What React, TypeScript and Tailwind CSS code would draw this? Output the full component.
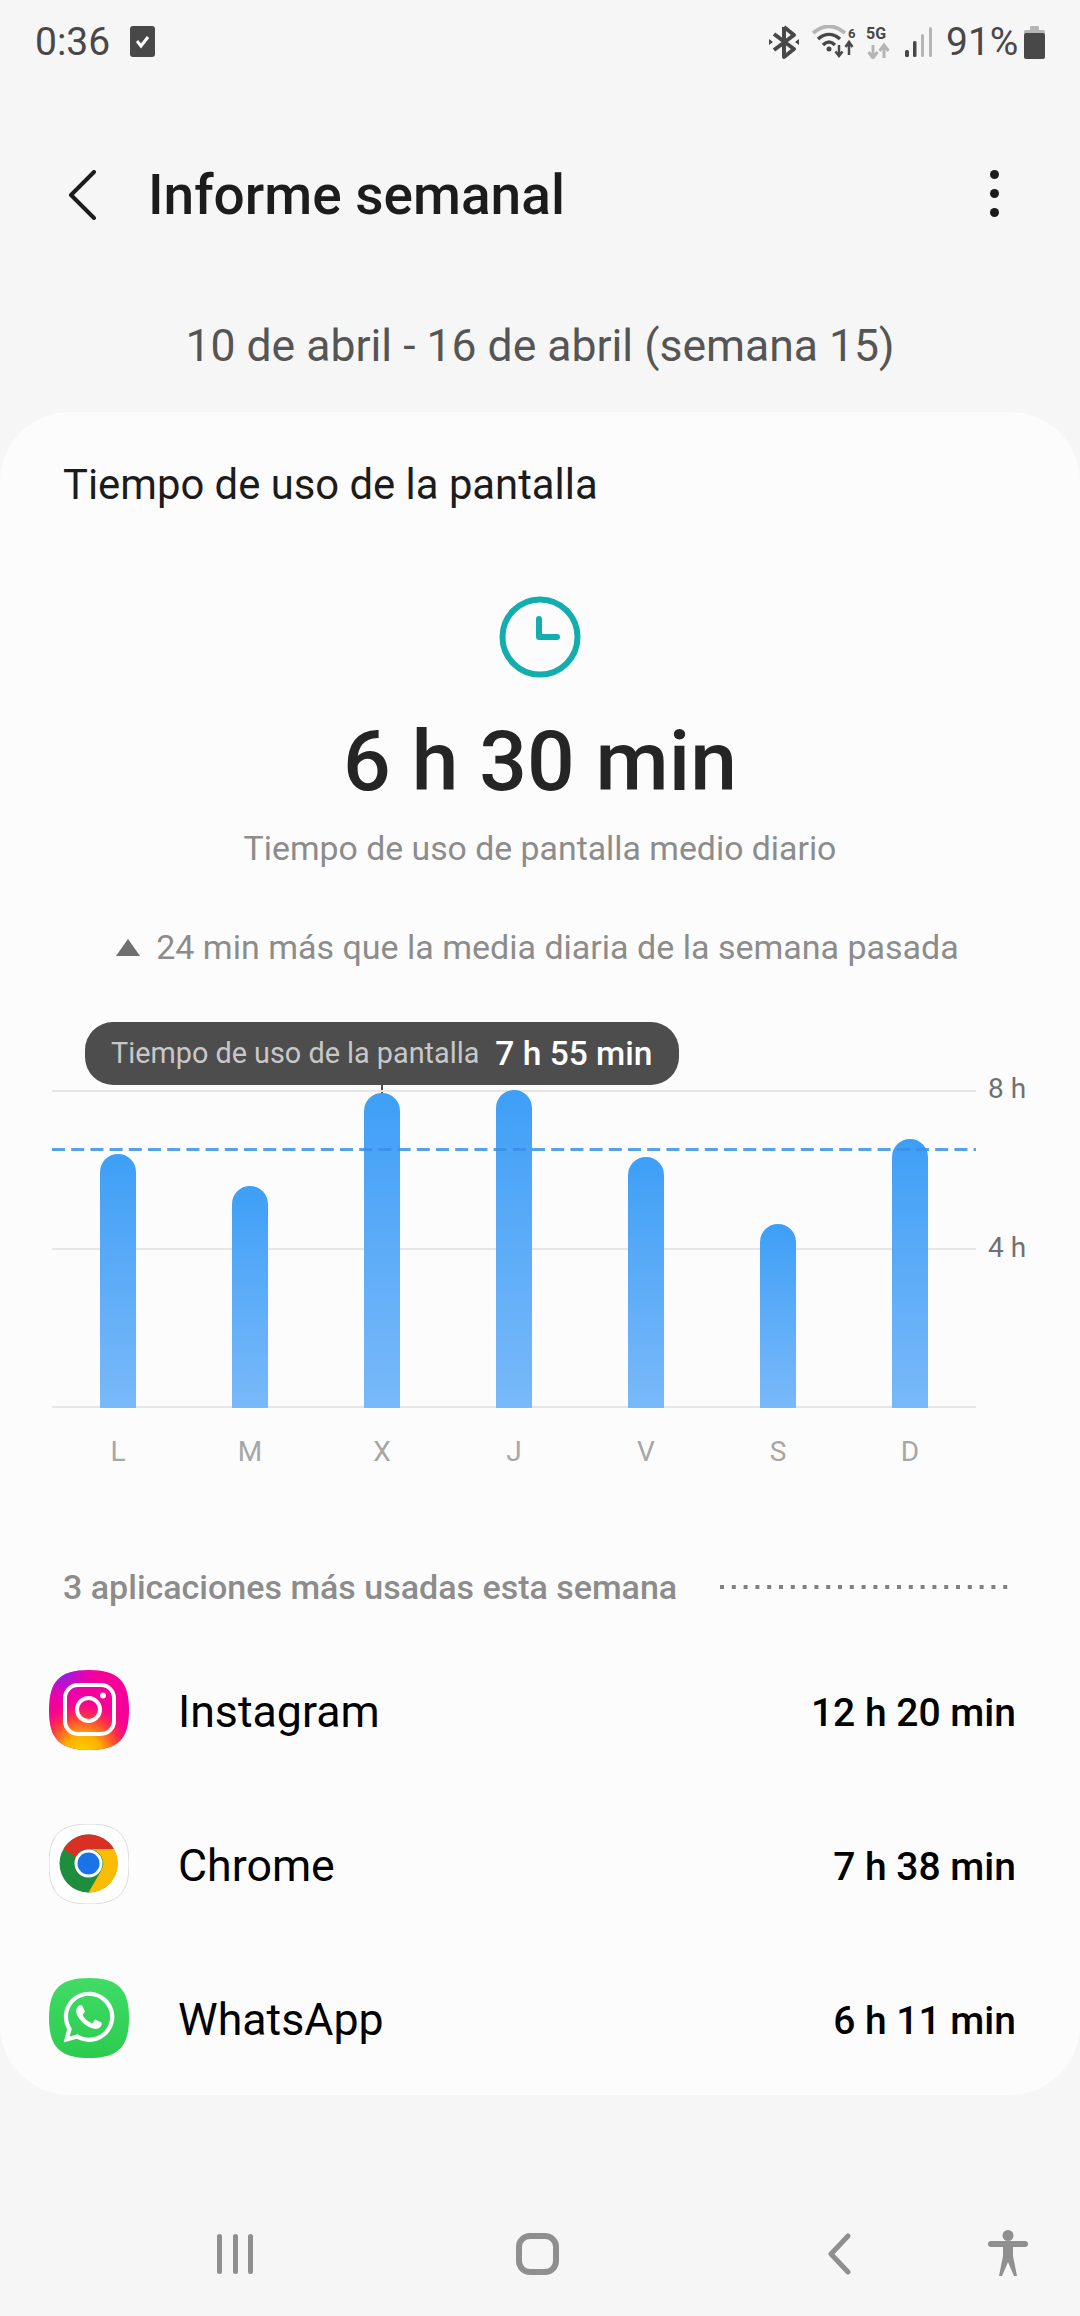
import type { ReactNode } from 'react';
import { FaWhatsapp } from 'react-icons/fa';

const bars = [
  { day: 'L', top: 1154 },
  { day: 'M', top: 1186 },
  { day: 'X', top: 1093 },
  { day: 'J', top: 1090 },
  { day: 'V', top: 1157 },
  { day: 'S', top: 1224 },
  { day: 'D', top: 1139 },
];

const BASELINE = 1408;
const SQUIRCLE = 'M40 0C69 0 80 11 80 40C80 69 69 80 40 80C11 80 0 69 0 40C0 11 11 0 40 0Z';

function StatusIcons() {
  return (
    <div className="flex items-center">
      <svg width="30" height="34" viewBox="0 0 30 34" fill="none">
        <path d="M15 2V32L25 24L5 9M15 2L25 10L5 25" stroke="#484848" strokeWidth="4" strokeLinejoin="round" />
        <path d="M0 14L4 17L0 20ZM30 14L26 17L30 20Z" fill="#484848" />
      </svg>
      <svg width="46" height="34" viewBox="0 0 46 34" className="ml-[13px]" fill="none">
        <path d="M1 8C12 -1 22 -1 33 8" stroke="#b5b5b5" strokeWidth="4" />
        <path d="M6 14C13 8 21 8 28 14M11 20C15 16 19 16 23 20" stroke="#484848" strokeWidth="3.5" />
        <circle cx="17" cy="24" r="2.5" fill="#484848" />
        <path d="M27 20V30M23.5 26.5L27 31L30.5 26.5" stroke="#484848" strokeWidth="2.5" />
        <path d="M37 30V18M33.5 22L37 17L40.5 22" stroke="#484848" strokeWidth="2.5" />
        <text x="36" y="13" fontSize="13" fontWeight="700" fill="#484848" fontFamily="Roboto, sans-serif">6</text>
      </svg>
      <svg width="26" height="34" viewBox="0 0 26 34" className="ml-[8px]" fill="none">
        <text x="0" y="14" fontSize="16" fontWeight="700" fill="#484848" fontFamily="Roboto, sans-serif">5G</text>
        <path d="M7 20V32M2.5 27L7 33L11.5 27" stroke="#b5b5b5" strokeWidth="3" />
        <path d="M18 33V21M13.5 26L18 20L22.5 26" stroke="#b5b5b5" strokeWidth="3" />
      </svg>
      <svg width="28" height="32" viewBox="0 0 28 32" className="ml-[13px]">
        <rect x="0" y="24" width="4" height="7" rx="1.5" fill="#484848" />
        <rect x="8" y="15" width="3.5" height="16" rx="1.5" fill="#484848" />
        <rect x="16" y="8" width="3" height="23" rx="1.5" fill="#b5b5b5" />
        <rect x="24" y="1" width="3" height="30" rx="1.5" fill="#b5b5b5" />
      </svg>
      <span className="ml-[13px] text-[39px] leading-none text-[#484848] w-[75px]">91%</span>
      <svg width="21" height="33" viewBox="0 0 21 33" className="ml-[3px]">
        <rect x="6" y="0" width="9" height="5" rx="1" fill="#b5b5b5" />
        <rect x="0" y="4" width="21" height="4" rx="1.5" fill="#b5b5b5" />
        <rect x="0" y="7" width="21" height="26" rx="2" fill="#484848" />
      </svg>
    </div>
  );
}

function InstagramIcon() {
  return (
    <svg width="80" height="80" viewBox="0 0 80 80">
      <defs>
        <radialGradient id="igYellow" cx="0.42" cy="1.05" r="0.78">
          <stop offset="0" stopColor="#ffd600" />
          <stop offset="0.3" stopColor="#ffb000" />
          <stop offset="0.6" stopColor="#ff3a3a" stopOpacity="0.95" />
          <stop offset="0.9" stopColor="#ff0090" stopOpacity="0" />
        </radialGradient>
        <radialGradient id="igPurple" cx="0.15" cy="0" r="0.45">
          <stop offset="0" stopColor="#6a2cff" />
          <stop offset="1" stopColor="#e000d0" stopOpacity="0" />
        </radialGradient>
      </defs>
      <path d={SQUIRCLE} fill="#f5009a" />
      <path d={SQUIRCLE} fill="url(#igYellow)" />
      <path d={SQUIRCLE} fill="url(#igPurple)" />
      <rect x="16" y="15" width="49" height="49" rx="13" fill="none" stroke="#fff" strokeWidth="4" />
      <circle cx="39.5" cy="39.5" r="11.5" fill="none" stroke="#fff" strokeWidth="4" />
      <circle cx="54" cy="25.5" r="3" fill="#fff" />
    </svg>
  );
}

function ChromeIcon() {
  return (
    <svg width="80" height="80" viewBox="0 0 80 80">
      <path d={SQUIRCLE} fill="#fff" stroke="#dcdcdc" strokeWidth="1" />
      <circle cx="39.5" cy="39.5" r="29" fill="#1e8e3e" />
      <path d="M39.5 10.5A29 29 0 0 1 65 25H39.5A14.5 14.5 0 0 0 26.5 33L14.5 25A29 29 0 0 1 39.5 10.5Z" fill="#d93025" />
      <path d="M65 25A29 29 0 0 1 39.5 68.5L52 47A14.5 14.5 0 0 0 39.5 25Z" fill="#fbbc04" />
      <circle cx="39.5" cy="39.5" r="14" fill="#fff" />
      <circle cx="39.5" cy="39.5" r="11" fill="#1a73e8" />
    </svg>
  );
}

function WhatsAppIcon() {
  return (
    <div className="relative w-[80px] h-[80px]">
      <svg width="80" height="80" viewBox="0 0 80 80">
        <defs>
          <linearGradient id="waGreen" x1="0" y1="0" x2="0" y2="1">
            <stop offset="0" stopColor="#40dc66" />
            <stop offset="1" stopColor="#2ccb4f" />
          </linearGradient>
        </defs>
        <path d={SQUIRCLE} fill="url(#waGreen)" />
      </svg>
      <FaWhatsapp className="absolute left-[11px] top-[10px] text-white" size={58} />
    </div>
  );
}

function AppRow({ icon, name, time }: { icon: ReactNode; name: string; time: string }) {
  return (
    <div className="flex items-center h-[154px] pl-[49px] pr-[64px]">
      {icon}
      <span className="ml-[49px] text-[44.7px] leading-none text-black pt-[4px]">{name}</span>
      <span className="ml-auto text-[39px] leading-none font-medium text-black pt-[6px]">{time}</span>
    </div>
  );
}

export default function App() {
  return (
    <div className="w-[1080px] h-[2316px] bg-[#f6f6f6] overflow-hidden font-['Roboto',sans-serif]">
      <div className="h-[84px] flex items-center justify-between pl-[35px] pr-[35px]">
        <div className="flex items-center">
          <span className="text-[39px] leading-none text-[#484848]">0:36</span>
          <svg width="25" height="31" viewBox="0 0 25 31" className="ml-[20px] -mt-[2px]">
            <rect width="25" height="31" rx="3" fill="#484848" />
            <path d="M7 15L11 20L18 11" fill="none" stroke="#fff" strokeWidth="3" />
          </svg>
        </div>
        <StatusIcons />
      </div>

      <div className="h-[222px] flex items-center pl-[68px] pr-[81px]">
        <svg width="28" height="50" viewBox="0 0 28 50" fill="none">
          <path d="M26 2L3 25L26 48" stroke="#1c1c1c" strokeWidth="4" strokeLinecap="round" strokeLinejoin="round" />
        </svg>
        <h1 className="ml-[52px] text-[55px] leading-none font-medium text-[#1c1c1c]">Informe semanal</h1>
        <div className="ml-auto flex flex-col gap-[10px] -mt-[3px]">
          <span className="block w-[9px] h-[9px] rounded-full bg-[#1c1c1c]" />
          <span className="block w-[9px] h-[9px] rounded-full bg-[#1c1c1c]" />
          <span className="block w-[9px] h-[9px] rounded-full bg-[#1c1c1c]" />
        </div>
      </div>

      <div className="h-[80px] flex items-center justify-center text-[44.5px] leading-none text-[#555555]">
        10 de abril - 16 de abril (semana 15)
      </div>

      <div className="mt-[26px] h-[1683px] bg-[#fcfcfc] rounded-[70px]">
        <div className="h-[146px] flex items-center pl-[63px] text-[41.8px] leading-none text-[#1c1c1c]">
          Tiempo de uso de la pantalla
        </div>

        <div className="h-[158px] flex items-center justify-center">
          <svg width="82" height="82" viewBox="0 0 82 82" fill="none">
            <circle cx="41" cy="41" r="37.5" stroke="#12aeae" strokeWidth="6" />
            <path d="M40 23V41H58" stroke="#12aeae" strokeWidth="6" strokeLinecap="round" strokeLinejoin="round" />
          </svg>
        </div>

        <div className="h-[92px] flex items-center justify-center text-[84px] leading-none font-medium text-[#252525]">
          6 h 30 min
        </div>

        <div className="h-[80px] flex items-center justify-center text-[33.8px] leading-none text-[#8c8c8c] pt-[2px]">
          Tiempo de uso de pantalla medio diario
        </div>

        <div className="h-[118px] flex items-center justify-center text-[34px] leading-none text-[#8c8c8c] pr-[5px]">
          <span className="w-0 h-0 border-l-[12px] border-r-[12px] border-b-[17px] border-l-transparent border-r-transparent border-b-[#707070] mr-[16px]" />
          24 min más que la media diaria de la semana pasada
        </div>

        <div className="relative h-[84px]">
          <div className="absolute left-[85px] top-[16px] w-[594px] h-[63px] rounded-[28px] bg-[#4d4d4d] flex items-center pl-[26px] z-10">
            <span className="text-[28.8px] leading-none text-[#c8c8c8]">Tiempo de uso de la pantalla</span>
            <span className="ml-[16px] text-[33.5px] leading-none font-medium text-white">7 h 55 min</span>
          </div>
          <div className="absolute left-[381px] top-[79px] w-[2px] h-[10px] bg-[#4d4d4d]" />
        </div>

        <div className="relative ml-[52px] w-[924px] h-[318px] border-b-2 border-[#e6e6e6]">
          <div className="absolute left-0 right-0 top-0 h-[2px] bg-[#e6e6e6]" />
          <div className="absolute left-0 right-0 top-[158px] h-[2px] bg-[#e6e6e6]" />
          <span className="absolute left-[936px] top-[-15px] text-[28px] leading-none text-[#707070]">8&nbsp;h</span>
          <span className="absolute left-[936px] top-[144px] text-[28px] leading-none text-[#707070]">4&nbsp;h</span>
          <div className="relative grid grid-cols-7 h-full items-end">
            {bars.map((bar) => (
              <div key={bar.day} className="flex justify-center h-full items-end">
                <div
                  className="w-[36px] rounded-t-full bg-gradient-to-b from-[#3d9ff6] to-[#78b9f9]"
                  style={{ height: BASELINE - bar.top }}
                />
              </div>
            ))}
          </div>
          <svg className="absolute left-0 top-[58px]" width="924" height="3" viewBox="0 0 924 3">
            <line x1="0" y1="1.5" x2="924" y2="1.5" stroke="#3a8fe8" strokeOpacity="0.85" strokeWidth="3" strokeDasharray="13 6.2" />
          </svg>
        </div>

        <div className="ml-[52px] w-[924px] grid grid-cols-7 h-[88px] items-center text-center text-[28px] leading-none text-[#a6a6a6]">
          {bars.map((bar) => (
            <span key={bar.day}>{bar.day}</span>
          ))}
        </div>

        <div className="mt-[45px] h-[92px] flex items-center pl-[63px]">
          <span className="text-[34px] leading-none font-medium text-[#8c8c8c]">3 aplicaciones más usadas esta semana</span>
          <svg className="ml-auto mr-[72px]" width="288" height="4" viewBox="0 0 288 4">
            <line x1="0" y1="2" x2="288" y2="2" stroke="#808080" strokeWidth="4" strokeDasharray="4 7.8" />
          </svg>
        </div>

        <AppRow icon={<InstagramIcon />} name="Instagram" time="12 h 20 min" />
        <AppRow icon={<ChromeIcon />} name="Chrome" time="7 h 38 min" />
        <AppRow icon={<WhatsAppIcon />} name="WhatsApp" time="6 h 11 min" />
      </div>

      <div className="mt-[97px] h-[124px] flex items-center">
        <div className="ml-[217px] w-[36px] h-[40px] flex justify-between">
          <span className="block w-[5px] h-full rounded-full bg-[#8f8f8f]" />
          <span className="block w-[5px] h-full rounded-full bg-[#8f8f8f]" />
          <span className="block w-[5px] h-full rounded-full bg-[#8f8f8f]" />
        </div>
        <div className="ml-[263px] w-[43px] h-[42px] rounded-[14px] border-[6px] border-[#8f8f8f]" />
        <svg width="24" height="42" viewBox="0 0 24 42" fill="none" className="ml-[268px]">
          <path d="M21 3L4 21L21 39" stroke="#8f8f8f" strokeWidth="5" strokeLinecap="round" strokeLinejoin="round" />
        </svg>
        <svg width="40" height="48" viewBox="0 0 40 48" className="ml-[137px]">
          <ellipse cx="20" cy="5.5" rx="5.5" ry="5.5" fill="#8f8f8f" />
          <path d="M3 14H37" stroke="#8f8f8f" strokeWidth="6" strokeLinecap="round" />
          <path d="M15 15H25L25 26L29 46L26 46L20 32L14 46L11 46L15 26Z" fill="#8f8f8f" />
        </svg>
      </div>
    </div>
  );
}
